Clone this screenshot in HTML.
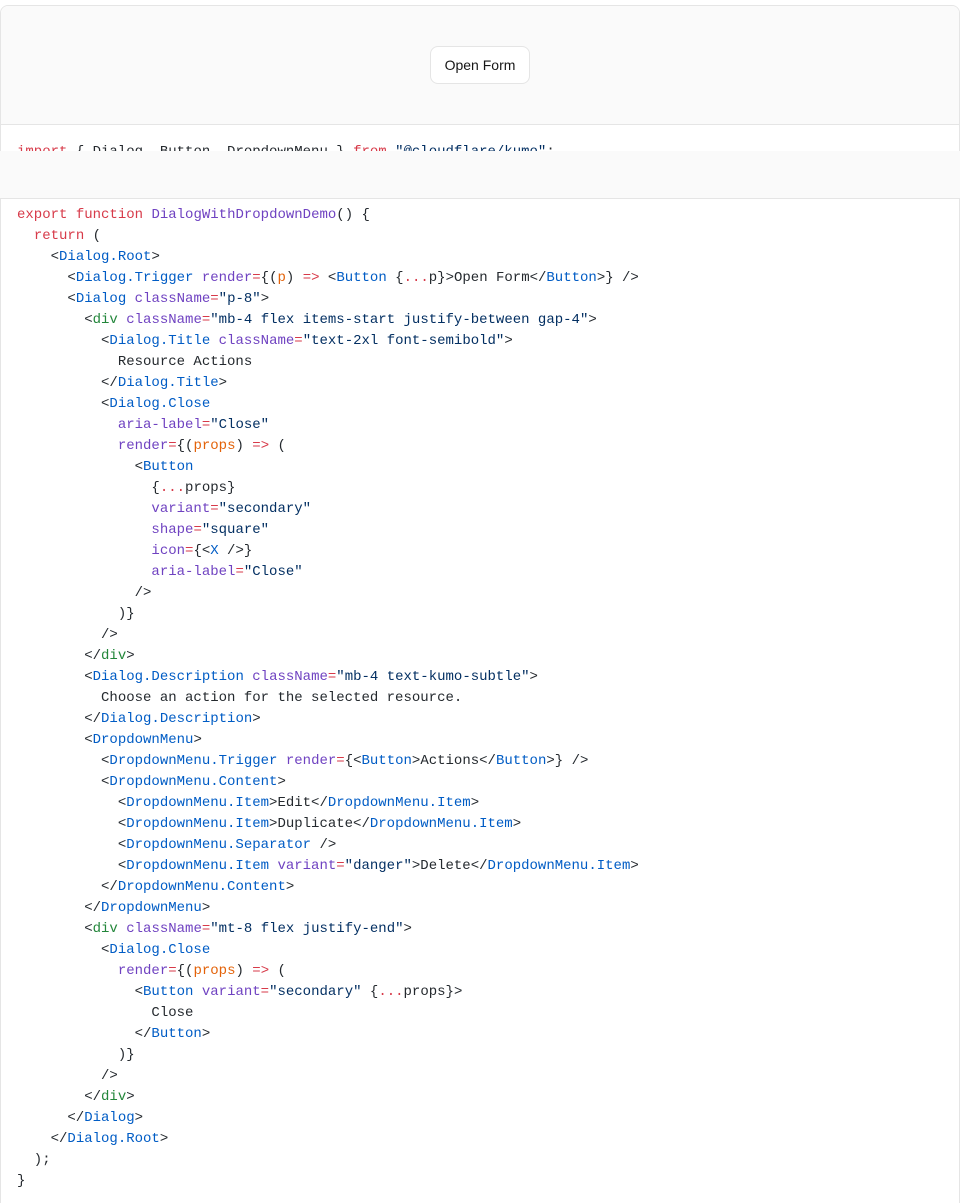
<!DOCTYPE html>
<html><head><meta charset="utf-8"><style>
html,body{margin:0;padding:0;background:#fff;width:960px;height:1203px;overflow:hidden}
.wrap{position:relative;width:960px;height:1203px;overflow:hidden}
.box{position:absolute;left:0;top:5px;width:958px;height:1250px;border:1px solid #e5e5e5;border-radius:8px;background:#fff;overflow:hidden}
.prev{position:absolute;left:0;top:0;width:958px;height:118px;background:#fafafa;border-bottom:1px solid #e5e5e5}
.btn{position:absolute;left:429px;top:40px;width:100px;height:38px;border:1px solid #e5e5e5;border-radius:8px;background:#fff;font:500 14px "Liberation Sans",sans-serif;color:#171717;text-align:center;line-height:36px;box-sizing:border-box}
pre{position:absolute;left:16px;top:136px;margin:0;font:14px/21px "Liberation Mono",monospace;color:#24292e}
.band{position:absolute;left:0;top:151px;width:960px;height:47px;background:#fafafa;border-bottom:1px solid #e5e5e5}
.k{color:#d73a49}.f{color:#6f42c1}.t{color:#005cc5}.a{color:#6f42c1}.s{color:#032f62}.p{color:#e36209}.g{color:#22863a}
</style></head><body><div class="wrap">
<div class="box"><div class="prev"><div class="btn">Open Form</div></div>
<pre><span class="k">import</span> { Dialog, Button, DropdownMenu } <span class="k">from</span> <span class="s">"@cloudflare/kumo"</span>;
<span class="k">import</span> { X } <span class="k">from</span> <span class="s">"lucide-react"</span>;

<span class="k">export</span> <span class="k">function</span> <span class="f">DialogWithDropdownDemo</span>() {
  <span class="k">return</span> (
    &lt;<span class="t">Dialog.Root</span>&gt;
      &lt;<span class="t">Dialog.Trigger</span> <span class="a">render</span><span class="k">=</span>{(<span class="p">p</span>) <span class="k">=&gt;</span> &lt;<span class="t">Button</span> {<span class="k">...</span>p}&gt;Open Form&lt;/<span class="t">Button</span>&gt;} /&gt;
      &lt;<span class="t">Dialog</span> <span class="a">className</span><span class="k">=</span><span class="s">"p-8"</span>&gt;
        &lt;<span class="g">div</span> <span class="a">className</span><span class="k">=</span><span class="s">"mb-4 flex items-start justify-between gap-4"</span>&gt;
          &lt;<span class="t">Dialog.Title</span> <span class="a">className</span><span class="k">=</span><span class="s">"text-2xl font-semibold"</span>&gt;
            Resource Actions
          &lt;/<span class="t">Dialog.Title</span>&gt;
          &lt;<span class="t">Dialog.Close</span>
            <span class="a">aria-label</span><span class="k">=</span><span class="s">"Close"</span>
            <span class="a">render</span><span class="k">=</span>{(<span class="p">props</span>) <span class="k">=&gt;</span> (
              &lt;<span class="t">Button</span>
                {<span class="k">...</span>props}
                <span class="a">variant</span><span class="k">=</span><span class="s">"secondary"</span>
                <span class="a">shape</span><span class="k">=</span><span class="s">"square"</span>
                <span class="a">icon</span><span class="k">=</span>{&lt;<span class="t">X</span> /&gt;}
                <span class="a">aria-label</span><span class="k">=</span><span class="s">"Close"</span>
              /&gt;
            )}
          /&gt;
        &lt;/<span class="g">div</span>&gt;
        &lt;<span class="t">Dialog.Description</span> <span class="a">className</span><span class="k">=</span><span class="s">"mb-4 text-kumo-subtle"</span>&gt;
          Choose an action for the selected resource.
        &lt;/<span class="t">Dialog.Description</span>&gt;
        &lt;<span class="t">DropdownMenu</span>&gt;
          &lt;<span class="t">DropdownMenu.Trigger</span> <span class="a">render</span><span class="k">=</span>{&lt;<span class="t">Button</span>&gt;Actions&lt;/<span class="t">Button</span>&gt;} /&gt;
          &lt;<span class="t">DropdownMenu.Content</span>&gt;
            &lt;<span class="t">DropdownMenu.Item</span>&gt;Edit&lt;/<span class="t">DropdownMenu.Item</span>&gt;
            &lt;<span class="t">DropdownMenu.Item</span>&gt;Duplicate&lt;/<span class="t">DropdownMenu.Item</span>&gt;
            &lt;<span class="t">DropdownMenu.Separator</span> /&gt;
            &lt;<span class="t">DropdownMenu.Item</span> <span class="a">variant</span><span class="k">=</span><span class="s">"danger"</span>&gt;Delete&lt;/<span class="t">DropdownMenu.Item</span>&gt;
          &lt;/<span class="t">DropdownMenu.Content</span>&gt;
        &lt;/<span class="t">DropdownMenu</span>&gt;
        &lt;<span class="g">div</span> <span class="a">className</span><span class="k">=</span><span class="s">"mt-8 flex justify-end"</span>&gt;
          &lt;<span class="t">Dialog.Close</span>
            <span class="a">render</span><span class="k">=</span>{(<span class="p">props</span>) <span class="k">=&gt;</span> (
              &lt;<span class="t">Button</span> <span class="a">variant</span><span class="k">=</span><span class="s">"secondary"</span> {<span class="k">...</span>props}&gt;
                Close
              &lt;/<span class="t">Button</span>&gt;
            )}
          /&gt;
        &lt;/<span class="g">div</span>&gt;
      &lt;/<span class="t">Dialog</span>&gt;
    &lt;/<span class="t">Dialog.Root</span>&gt;
  );
}</pre>
</div>
<div class="band"></div>
</div></body></html>
